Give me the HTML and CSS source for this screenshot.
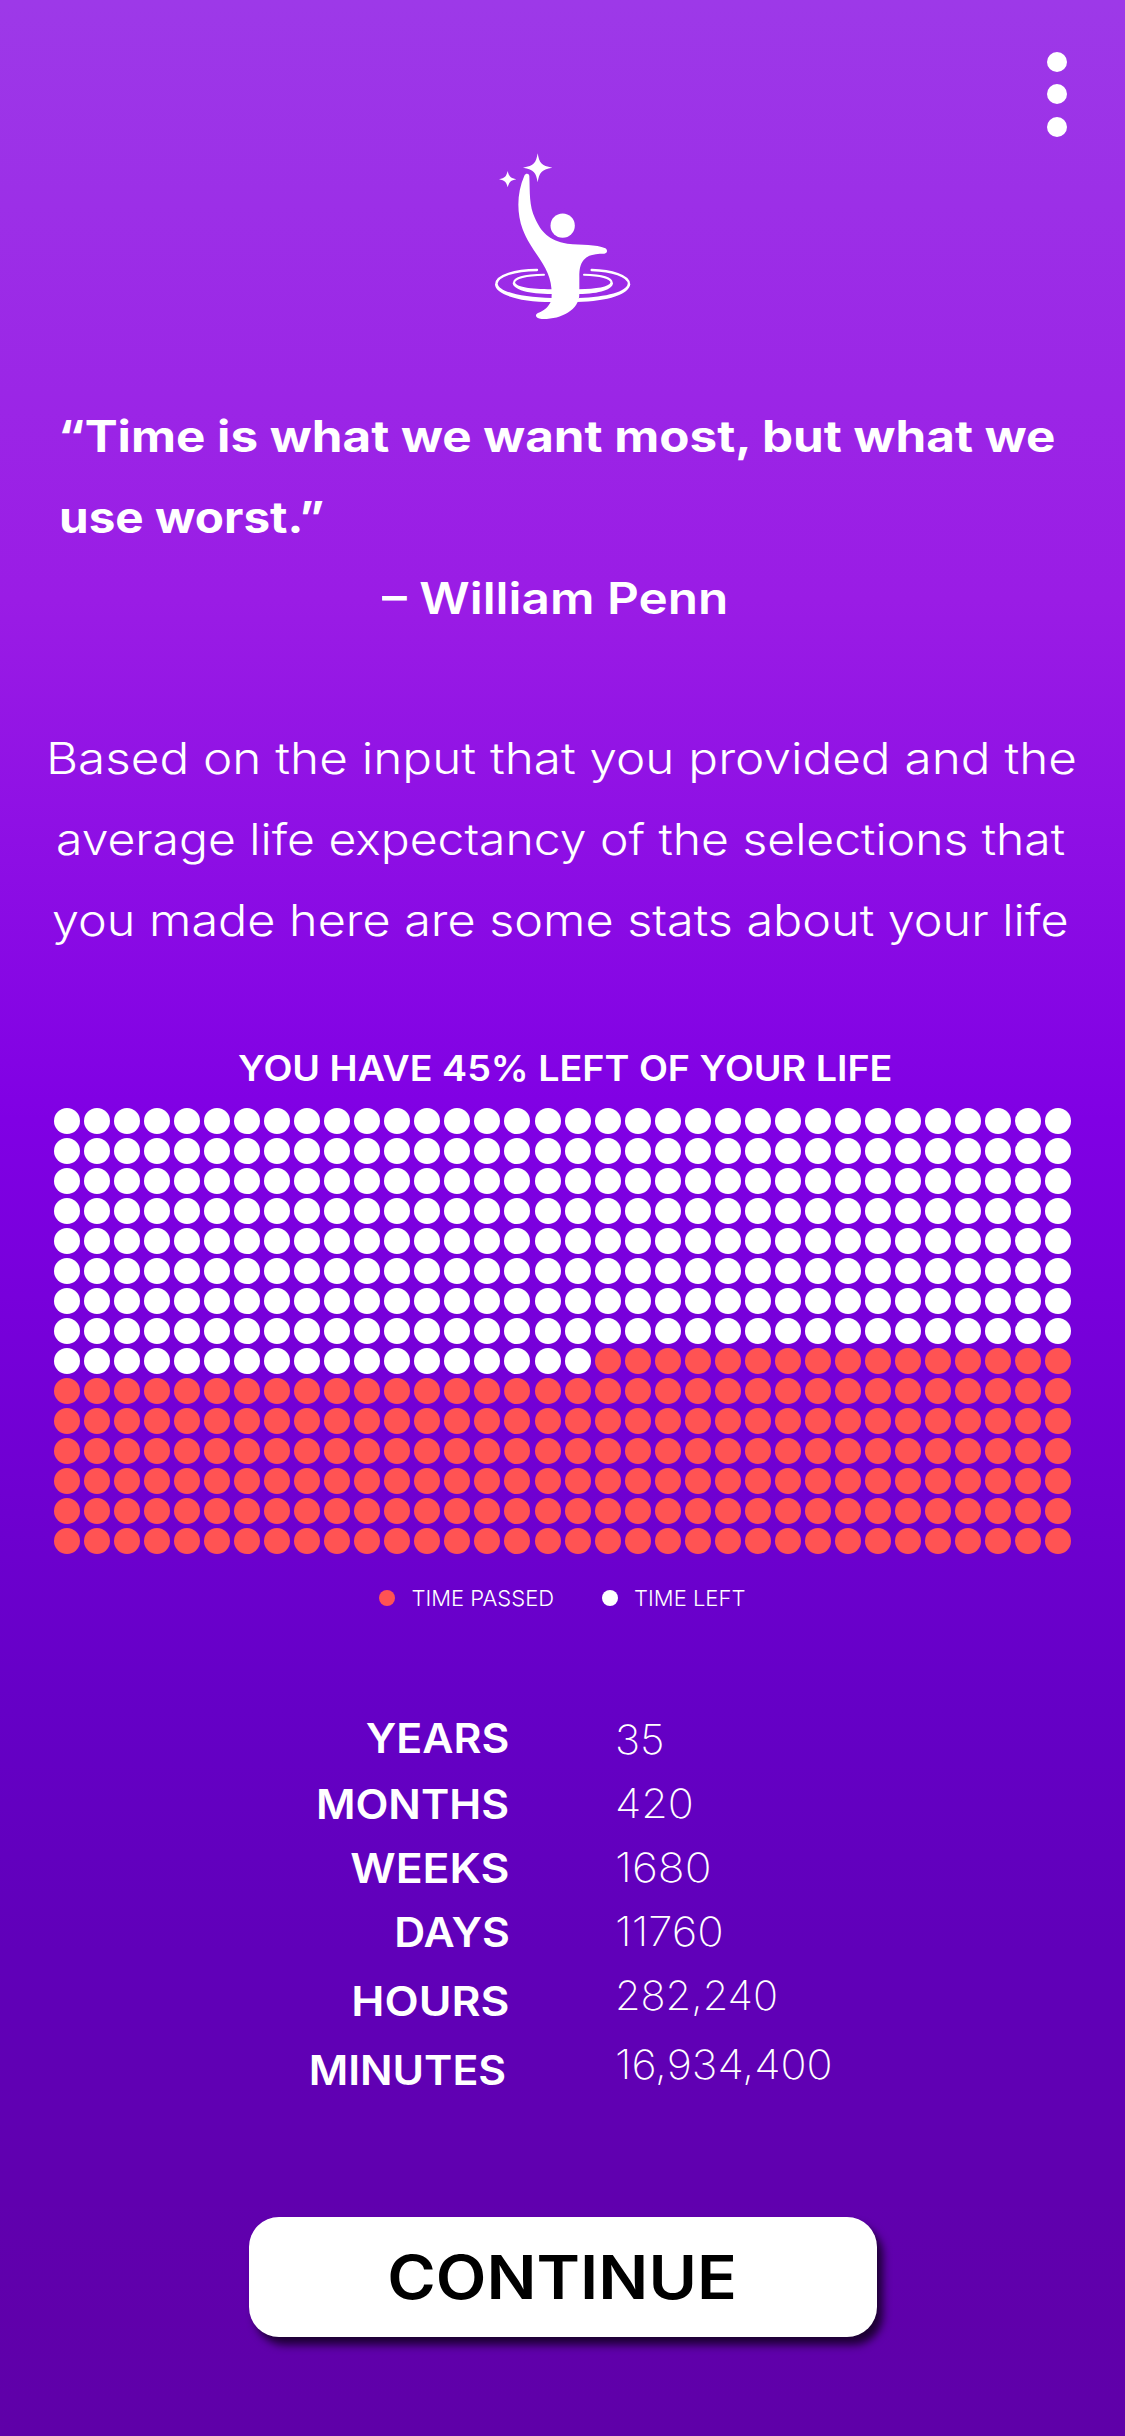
FILE: index.html
```html
<!DOCTYPE html>
<html lang="en">
<head>
<meta charset="utf-8">
<title>Your life stats</title>
<link rel="stylesheet" href="styles.css">
</head>
<body>
<main class="screen">
  <header class="top">
    <button class="menu" aria-label="Menu"><i></i><i></i><i></i></button>
    <svg class="logo" viewBox="0 0 510 570" aria-hidden="true">
      <g fill="none" stroke="#fff" stroke-linecap="round">
        <path stroke-width="7" d="M171 390C105 391 50 406 49 432"/>
        <path stroke-width="7" d="M335 390C395 392 446 407 447 432"/>
        <path stroke-width="6" d="M192 404C140 405 102 413 102 428"/>
        <path stroke-width="6" d="M312 404C358 405 395 413 395 428"/>
      </g>
      <path fill="#fff" d="M45 432C45 464 118 486 216 486L216 474C125 472 56 455 53 431ZM451 432C449 462 385 484 290 486L296 474C380 471 441 454 443 431ZM98 428C98 448 145 462 216 462L216 448C150 447 109 442 105 427ZM399 428C399 448 360 461 296 462L296 448C350 447 387 441 392 427Z"/>
      <path fill="#fff" d="M133 107C137 99 147 99 148 108C150 160 147 196 165 235C183 275 205 302 262 311C305 316 348 312 376 325C384 330 382 341 373 341C345 341 325 344 311 360C300 373 298 390 298 410L298 462C298 512 240 539 185 537C167 536 163 524 174 519C195 512 205 500 213 484C218 460 214 425 203 400C185 355 148 322 128 268C110 220 110 158 133 107Z"/>
      <circle fill="#fff" cx="248" cy="257" r="36.500"/>
      <path fill="#fff" d="M173 40C178 68 183 78 217 83C183 89 178 98 173 127C168 98 163 89 129 83C163 78 168 68 173 40ZM83 93C87 109 91 114 109 118C91 122 87 127 83 142C79 127 75 122 57 118C75 114 79 109 83 93Z"/>
    </svg>
  </header>

  <blockquote class="quote">
    <span class="line q1">“Time is what we want most, but what we</span>
    <span class="line q2">use worst.”</span>
    <cite class="line author">– William Penn</cite>
  </blockquote>

  <p class="intro">
    <span class="line p1">Based on the input that you provided and the</span>
    <span class="line p2">average life expectancy of the selections that</span>
    <span class="line p3">you made here are some stats about your life</span>
  </p>

  <section class="chart">
    <h1 class="line chart-title">YOU HAVE 45% LEFT OF YOUR LIFE</h1>
    <div class="dots" id="dots"></div>
    <div class="legend">
      <span class="key"><i class="swatch passed"></i>TIME PASSED</span>
      <span class="key time-left"><i class="swatch"></i>TIME LEFT</span>
    </div>
  </section>

  <section class="stats">
    <div class="labels">
      <span>YEARS</span><span class="months">MONTHS</span><span class="wide">WEEKS</span><span>DAYS</span><span class="wide hours">HOURS</span><span class="minutes">MINUTES</span>
    </div>
    <div class="values">
      <span class="v1">35</span><span class="v2">420</span><span class="v3">1680</span><span class="v4">11760</span><span class="v5">282,240</span><span class="v6">16,934,400</span>
    </div>
  </section>

  <button class="continue"><span>CONTINUE</span></button>
</main>
<script src="dots.js"></script>
</body>
</html>
```
FILE: styles.css
```css
* { box-sizing: border-box; }
body { margin: 0; }
button { border: 0; font: inherit; }

.screen {
  display: flex;
  flex-direction: column;
  width: 1125px;
  height: 2436px;
  overflow: hidden;
  color: #fff;
  font-family: Inter, "Open Sans", sans-serif;
  background: linear-gradient(#9d39e8 0, #9a1ce5 600px, #8000e4 1120px, #6500c6 1710px, #6000b9 1950px, #6000ae 2200px, #5f00a8 2436px);
}

.top {
  display: grid;
  height: 396px;
}
.menu, .logo { grid-area: 1 / 1; }
.menu {
  display: flex;
  flex-direction: column;
  gap: 12px;
  justify-self: end;
  align-self: start;
  margin: 52px 58px 0 0;
  padding: 0;
  background: none;
}
.menu i { width: 20px; height: 20px; border-radius: 50%; background: #fff; }
.menu i:last-child { margin-top: 1px; }
.logo { width: 170px; height: 190px; margin: 140px 0 0 480px; }

.line {
  display: block;
  width: max-content;
  white-space: nowrap;
  transform-origin: left center;
}
.quote {
  margin: 0;
  font-size: 43.3px;
  line-height: 81px;
  font-weight: 680;
}
.q1 { margin-left: 57.5px; transform: scaleX(1.14); }
.q2 { margin-left: 59px; transform: scaleX(1.1); }
.author { margin-left: 382px; font-style: normal; font-weight: 570; transform: scaleX(1.143); }

.intro {
  margin: 79px 0 0;
  font-size: 43.3px;
  line-height: 81px;
  font-weight: 300;
}
.p1 { margin-left: 46px; transform: scaleX(1.1416); }
.p2 { margin-left: 55.5px; transform: scaleX(1.11); }
.p3 { margin-left: 52px; transform: scaleX(1.121); }

.chart { margin-top: 82px; }
.chart-title {
  margin: 0 0 0 237.5px;
  font-size: 35px;
  line-height: 50px;
  font-weight: 560;
  transform: scaleX(1.077);
}
.dots {
  display: grid;
  grid-template-columns: repeat(34, 26px);
  grid-auto-rows: 26px;
  gap: 4px;
  padding: 15px 0 0 54px;
}
.dot { border-radius: 50%; background: #fff; }
.dot.passed, .swatch.passed { background: #ff5353; }
.dot.half { transform: translateX(1px); }

.legend {
  display: flex;
  gap: 49px;
  margin: 33px 0 0 379px;
  font-size: 22px;
  line-height: 22px;
  font-weight: 280;
}
.key { display: flex; align-items: center; gap: 16.5px; white-space: nowrap; }
.time-left { margin-left: -1.5px; }
.swatch { width: 16px; height: 16px; border-radius: 50%; background: #fff; }

.stats {
  display: flex;
  gap: 105px;
  margin-top: 98px;
  font-size: 40.4px;
  line-height: 64px;
}
.labels, .values { display: flex; flex-direction: column; }
.labels { width: 509.5px; align-items: flex-end; font-weight: 590; }
.labels span { transform: scaleX(1.061); transform-origin: right center; }
.labels .wide { transform: scaleX(1.102); }
.labels .months { margin-top: 2px; }
.labels .hours { margin-top: 5px; }
.labels .minutes { margin: 5px 3px 0 0; }
.values { padding-top: 1px; font-weight: 220; }
.values span { transform-origin: left center; }
.v1 { transform: scaleX(1.047); }
.v2 { transform: scaleX(1.064); }
.v3 { transform: scaleX(1.1); }
.v4 { transform: scaleX(1.083); }
.v5 { transform: scaleX(1.026); }
.v6 { margin-top: 5px; transform: scaleX(1.067); }

.continue {
  width: 628px;
  height: 120px;
  margin: 114px 0 0 248.5px;
  padding: 0;
  border-radius: 30px;
  background: #fff;
  color: #000;
  font-size: 60px;
  font-weight: 580;
  box-shadow: 6px 8px 8px rgba(0, 0, 0, 0.7);
}
.continue span { display: inline-block; transform: scaleX(1.099); }
```
FILE: dots.js
```js
// 34 x 15 dots: time left comes first, the rest has passed
const COLUMNS = 34, ROWS = 15, LEFT = 290;
const dots = document.getElementById("dots");
for (let i = 0; i < COLUMNS * ROWS; i++) {
  const dot = document.createElement("i");
  dot.className = "dot" + (i >= LEFT ? " passed" : "") + (i % COLUMNS >= 16 ? " half" : "");
  dots.append(dot);
}
```
